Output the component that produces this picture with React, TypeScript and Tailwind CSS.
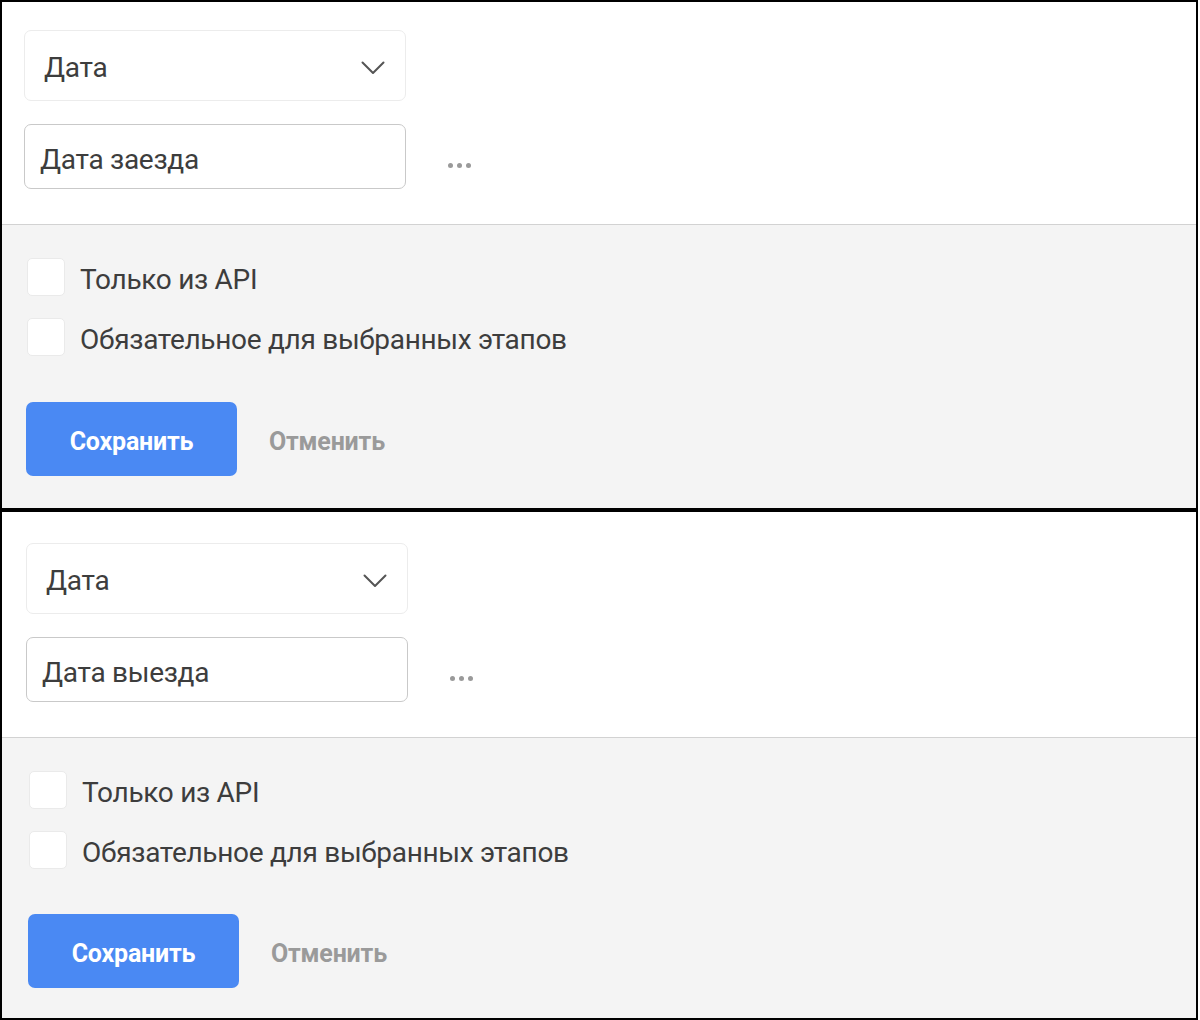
import React from 'react';

interface RuleCardProps {
  fieldName: string;
  padLeft: string;
  padTop: string;
  bottomGap: string;
}

const ChevronIcon = () => (
  <svg width="24" height="14" viewBox="0 0 24 14" fill="none" className="mt-[4px] text-[#555]">
    <polyline points="1.5,1.5 12,12 22.5,1.5" stroke="currentColor" strokeWidth="2" strokeLinecap="round" strokeLinejoin="round" />
  </svg>
);

const Checkbox: React.FC<{ label: string }> = ({ label }) => (
  <label className="flex items-center gap-[15px] cursor-pointer">
    <span className="ml-[3px] w-[38px] h-[38px] rounded-[5px] bg-white border border-[#eaeaea]" />
    <span className="mt-[6px] text-[28px] tracking-[-0.3px] text-[#3d3d3d] leading-none">{label}</span>
  </label>
);

const RuleCard: React.FC<RuleCardProps> = ({ fieldName, padLeft, padTop, bottomGap }) => {
  return (
    <div className="h-[510px] border-2 border-black flex flex-col">
      {/* fields */}
      <div className={`bg-white pb-[35px] border-b border-[#d2d2d2] ${padLeft} ${padTop}`}>
        <div className="w-[382px] h-[71px] flex items-center justify-between pl-[19px] pr-[20px] rounded-[7px] border border-[#ececec] bg-white">
          <span className="mt-[5px] text-[28px] tracking-[-0.3px] text-[#3d3d3d]">Дата</span>
          <ChevronIcon />
        </div>
        <div className="mt-[23px] flex items-center">
          <div className="w-[382px] h-[65px] flex items-center px-[15px] rounded-[7px] border border-[#c9c9c9] bg-white">
            <span className="mt-[6px] text-[28px] tracking-[-0.3px] text-[#3d3d3d]">{fieldName}</span>
          </div>
          <div className="ml-[42px] pt-[18px] flex gap-[4px]">
            <span className="w-[5px] h-[5px] rounded-full bg-[#9a9a9a]" />
            <span className="w-[5px] h-[5px] rounded-full bg-[#9a9a9a]" />
            <span className="w-[5px] h-[5px] rounded-full bg-[#9a9a9a]" />
          </div>
        </div>
      </div>

      {/* options */}
      <div className={`flex-1 bg-[#f4f4f4] pt-[33px] ${padLeft}`}>
        <div className="flex flex-col gap-[22px]">
          <Checkbox label="Только из API" />
          <Checkbox label="Обязательное для выбранных этапов" />
        </div>
        <div className={`flex items-center ${bottomGap}`}>
          <button className="ml-[2px] w-[211px] h-[74px] pt-[5px] rounded-[7px] bg-[#4a89f3] text-white text-[25px] font-bold tracking-[-0.2px]">
            Сохранить
          </button>
          <button className="ml-[32px] pt-[5px] text-[25px] font-bold tracking-[-0.2px] text-[#9a9a9a]">Отменить</button>
        </div>
      </div>
    </div>
  );
};

export default function App() {
  return (
    <div className="w-[1200px] h-[1020px] bg-white pr-[2px]" style={{ fontFamily: 'Roboto, "Noto Sans", sans-serif' }}>
      <RuleCard fieldName="Дата заезда" padLeft="pl-[22px]" padTop="pt-[28px]" bottomGap="mt-[46px]" />
      <RuleCard fieldName="Дата выезда" padLeft="pl-[24px]" padTop="pt-[31px]" bottomGap="mt-[45px]" />
    </div>
  );
}
